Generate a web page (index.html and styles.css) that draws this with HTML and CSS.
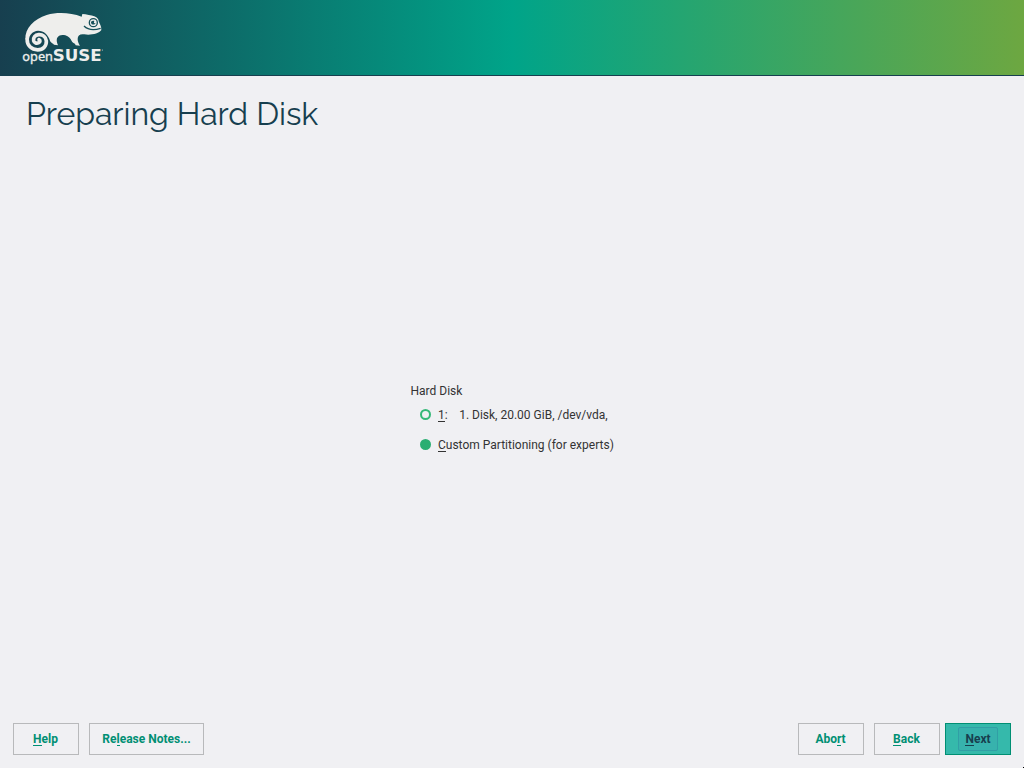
FILE: index.html
```html
<!DOCTYPE html>
<html lang="en">
<head>
<meta charset="utf-8">
<title>Preparing Hard Disk</title>
<link rel="stylesheet" href="styles.css">
</head>
<body>
<div class="installer">
  <header class="banner">
    <svg class="logo" viewBox="0 0 300 213" role="img" aria-label="openSUSE">
      <path class="fill" d="M34 106C33 72 60 45 98 33C132 23 170 26 203 38L205 30C217 31 232 34 241 37C250 41 254 45 254 52C257 60 263 68 262 78C255 90 228 94 211 91C198 89 191 94 191 105C191 113 194 119 198 125L185 124C183 116 178 120 173 111C169 103 164 97 154 94C143 91 132 94 129 103C127 110 129 117 132 124L120 122C117 116 112 119 108 110C102 92 90 80 72 80C56 81 45 94 45 107Z"/>
      <path class="tail" d="M39.500 106C39 124 52 137.500 71 137.500C88 137.500 98 125 97 111C96 98 86 91 74 92C63 93 57 101 59 110C61 117 68 119 74 116C79 113 79 109 75 107"/>
      <circle class="eye" cx="238" cy="56" r="12"/>
      <path class="pupil" d="M231 56C232 63 242 64 245 57C241 60 238 56 241 51C236 49 231 51 231 56Z"/>
      <path class="mouth" d="M210 66C221 77 241 79 260 73"/>
      <text class="open" x="25" y="171" textLength="92" lengthAdjust="spacingAndGlyphs">open</text>
      <text class="suse" x="116" y="171" textLength="147" lengthAdjust="spacingAndGlyphs">SUSE</text>
      <circle class="fill" cx="265" cy="138" r="1.5"/>
    </svg>
  </header>
  <h1 class="title">Preparing Hard Disk</h1>
  <main class="content">
    <div class="choices">
      <div class="caption">Hard Disk</div>
      <label class="choice"><span class="radio"></span><span><span class="key">1</span>:</span><span class="disk">1. Disk, 20.00 GiB, /dev/vda,</span></label>
      <label class="choice"><span class="radio checked"></span><span><span class="key">C</span>ustom Partitioning (for experts)</span></label>
    </div>
  </main>
  <footer class="actions">
    <button class="button"><span><span class="key">H</span>elp</span></button>
    <button class="button notes"><span>Re<span class="key">l</span>ease Notes...</span></button>
    <button class="button abort"><span>Abo<span class="key">r</span>t</span></button>
    <button class="button"><span><span class="key">B</span>ack</span></button>
    <button class="button next"><span class="focus"><span class="key">N</span>ext</span></button>
  </footer>
</div>
<div class="pointer"></div>
</body>
</html>
```
FILE: styles.css
```css
* { box-sizing: border-box; }
body { margin: 0; }
.installer {
  display: flex;
  flex-direction: column;
  width: 1024px;
  height: 768px;
  background: #f0f0f3;
  color: #333;
  font: 12px/16px Roboto, sans-serif;
}
.banner {
  height: 76px;
  padding: 4px 0 0 14px;
  background: linear-gradient(90deg, #173f4f, #00a489 50%, #6da741);
  border-bottom: 1px solid #173f4f;
}
.logo { display: block; width: 100px; height: 71px; }
.fill { fill: #eeeeec; }
.tail { fill: none; stroke: #eeeeec; stroke-width: 11; stroke-linecap: round; }
.eye { fill: #eeeeec; stroke: #17505a; stroke-width: 4; }
.pupil { fill: #17505a; }
.mouth { fill: none; stroke: #17505a; stroke-width: 4; }
.open, .suse { fill: #eeeeec; }
.open { font: 38px "Noto Sans", sans-serif; stroke: #eeeeec; stroke-width: 1; }
.suse { font: bold 48px "DejaVu Sans", sans-serif; }
.title {
  margin: 16px 0 0 26px;
  height: 44px;
  color: #173f4f;
  font: 400 32px/43px Raleway, Lato, sans-serif;
  letter-spacing: -0.06px;
  white-space: nowrap;
}
.content { flex: 1; padding: 247px 0 0 410px; }
.caption { height: 16px; padding-left: 0.5px; }
.choice { display: flex; align-items: center; height: 30px; padding-left: 10px; }
.caption + .choice { margin-top: 1px; }
.radio {
  width: 11px;
  height: 11px;
  margin: 0 7px 2px 0;
  border: 2px solid #35b878;
  border-radius: 50%;
}
.radio.checked { background: #2aae72; border-color: #2aae72; }
.disk { margin-left: 11.5px; }
.key { display: inline-block; height: 15px; border-bottom: 1px solid currentColor; vertical-align: top; }
.actions { display: flex; height: 45px; padding: 0 13px; }
.button {
  display: flex;
  align-items: center;
  justify-content: center;
  width: 66px;
  height: 32px;
  padding: 0 1px 0 0;
  border: 1px solid #b8b9bb;
  background: transparent;
  color: #008f73;
  font: bold 12px/16px Roboto, sans-serif;
}
.notes { width: 115px; margin-left: 10px; padding: 0; }
.abort { margin-left: auto; margin-right: 10px; }
.next { margin-left: 5px; padding: 0; background: #35b9ab; border-color: #008f73; color: #173f4f; }
.focus {
  display: flex;
  justify-content: center;
  padding-top: 3px;
  width: 40px;
  height: 24px;
  border: 1px solid #319fa5;
  border-radius: 2px;
  background: #37b2ad;
}
.pointer { position: absolute; right: 0; bottom: 0; width: 1px; height: 1px; background: #000; }
```
